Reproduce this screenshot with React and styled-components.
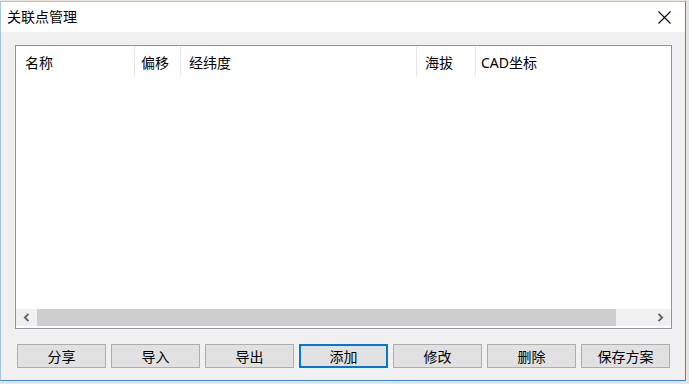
import styled, { createGlobalStyle } from "styled-components";

const GlobalStyle = createGlobalStyle`
  html, body {
    margin: 0;
    padding: 0;
    background: #e9e5dd;
  }
  body {
    width: 689px;
    height: 384px;
    overflow: hidden;
    font-family: "Noto Sans", "Noto Sans CJK SC", sans-serif;
  }
`;

const Window = styled.div`
  width: 684px;
  height: 378px;
  margin-top: 1px;
  border: 1px solid #3d8ad6;
  border-left-color: #a9c4df;
  border-top-color: #a9c4df;
  background: #f0f0f0;
  display: flex;
  flex-direction: column;
`;

const TitleBar = styled.div`
  height: 30px;
  background: #ffffff;
  display: flex;
  align-items: center;
  justify-content: space-between;
  padding-left: 6px;
`;

const Title = styled.span`
  font-size: 14px;
  color: #000;
  line-height: 1;
`;

const CloseButton = styled.div`
  width: 46px;
  height: 30px;
  display: flex;
  align-items: center;
  justify-content: center;
  margin-right: -2px;
`;

const Client = styled.div`
  flex: 1;
  display: flex;
  flex-direction: column;
  padding: 13px 13px 12px 14px;
  gap: 15px;
`;

const ListBox = styled.div`
  height: 282px;
  border: 1px solid #8f949c;
  background: #ffffff;
  display: flex;
  flex-direction: column;
`;

const Header = styled.div`
  height: 32px;
  display: flex;
`;

const HeaderCell = styled.div`
  width: ${(p) => (p.$w ? `${p.$w}px` : "auto")};
  flex: ${(p) => (p.$w ? "none" : "1")};
  padding-left: ${(p) => p.$pl || 8}px;
  display: flex;
  align-items: center;
  font-size: 14px;
  color: #000;
  box-sizing: border-box;
  position: relative;
  &::after {
    content: "";
    display: ${(p) => (p.$w ? "block" : "none")};
    position: absolute;
    right: 0;
    top: 0;
    bottom: 2px;
    width: 1px;
    background: #e5e5e5;
  }
`;

const Body = styled.div`
  flex: 1;
`;

const ScrollBar = styled.div`
  height: 17px;
  margin-bottom: 2px;
  background: #f0f0f0;
  display: flex;
  align-items: stretch;
`;

const ArrowButton = styled.div`
  width: 21px;
  display: flex;
  align-items: center;
  justify-content: center;
`;

const Track = styled.div`
  flex: 1;
  display: flex;
`;

const Thumb = styled.div`
  width: 579px;
  background: #cdcdcd;
`;

const ButtonRow = styled.div`
  display: flex;
  gap: 5px;
  padding: 0 2px 0 2px;
`;

const Button = styled.div`
  flex: 1;
  height: 24px;
  box-sizing: border-box;
  background: #e1e1e1;
  border: 1px solid ${(p) => (p.$default ? "#0078d7" : "#adadad")};
  box-shadow: ${(p) => (p.$default ? "inset 0 0 0 1px #0078d7" : "none")};
  display: flex;
  align-items: center;
  justify-content: center;
  font-size: 14px;
  color: #000;
`;

const columns = [
  { label: "名称", w: 119, pl: 9 },
  { label: "偏移", w: 46, pl: 6 },
  { label: "经纬度", w: 236, pl: 8 },
  { label: "海拔", w: 59, pl: 8 },
  { label: "CAD坐标", pl: 5 },
];

const buttons = ["分享", "导入", "导出", "添加", "修改", "删除", "保存方案"];

export default function App() {
  return (
    <>
      <GlobalStyle />
      <Window>
        <TitleBar>
          <Title>关联点管理</Title>
          <CloseButton>
            <svg width="13" height="13" viewBox="0 0 13 13">
              <path d="M0.5 0.5 L12.5 12.5 M12.5 0.5 L0.5 12.5" stroke="#111" strokeWidth="1.2" />
            </svg>
          </CloseButton>
        </TitleBar>
        <Client>
          <ListBox>
            <Header>
              {columns.map((c) => (
                <HeaderCell key={c.label} $w={c.w} $pl={c.pl}>
                  {c.label}
                </HeaderCell>
              ))}
            </Header>
            <Body />
            <ScrollBar>
              <ArrowButton>
                <svg width="7" height="9" viewBox="0 0 7 9">
                  <path d="M5.5 0.8 L1.8 4.5 L5.5 8.2" fill="none" stroke="#606060" strokeWidth="1.8" />
                </svg>
              </ArrowButton>
              <Track>
                <Thumb />
              </Track>
              <ArrowButton>
                <svg width="7" height="9" viewBox="0 0 7 9">
                  <path d="M1.5 0.8 L5.2 4.5 L1.5 8.2" fill="none" stroke="#606060" strokeWidth="1.8" />
                </svg>
              </ArrowButton>
            </ScrollBar>
          </ListBox>
          <ButtonRow>
            {buttons.map((b) => (
              <Button key={b} $default={b === "添加"}>
                {b}
              </Button>
            ))}
          </ButtonRow>
        </Client>
      </Window>
    </>
  );
}
